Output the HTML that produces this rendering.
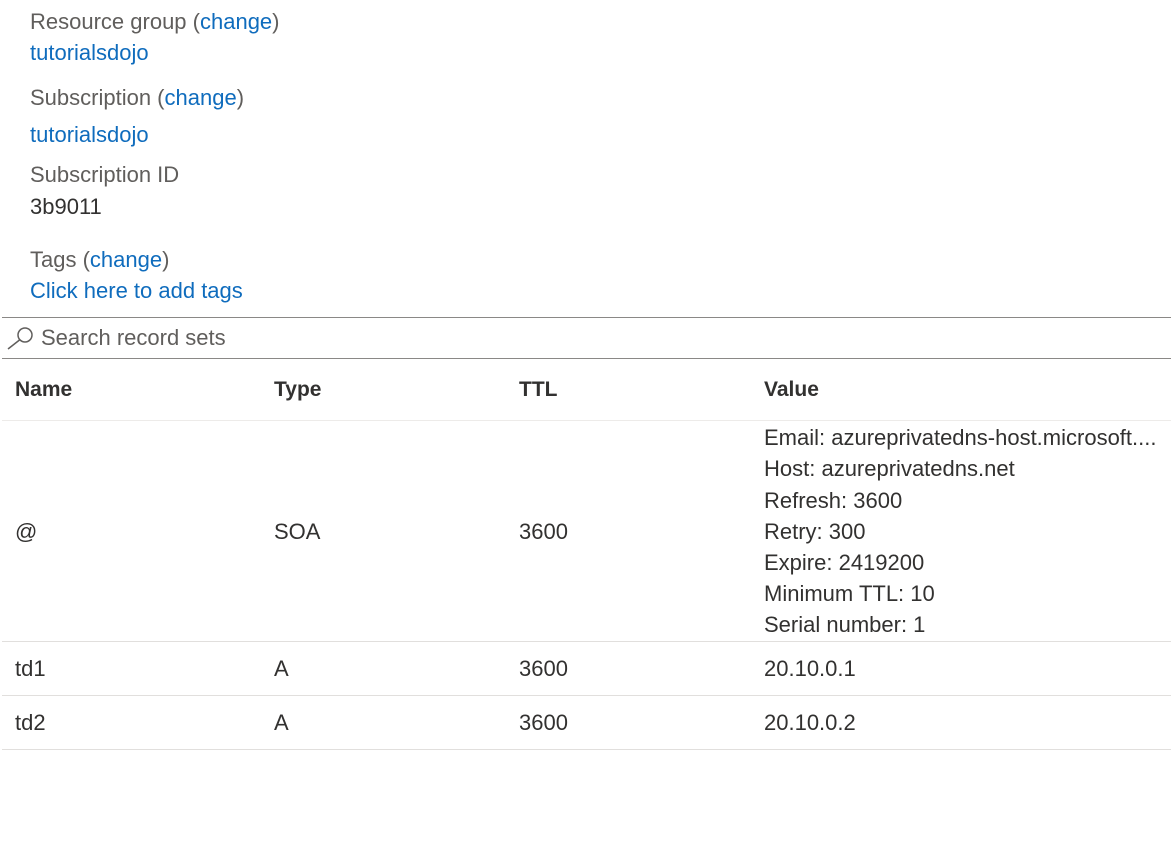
<!DOCTYPE html>
<html><head><style>
body{margin:0;width:1171px;height:858px;background:#fff;font-family:"Liberation Sans",sans-serif;font-size:22px;color:#323130;position:relative;overflow:hidden}
.t{position:absolute;line-height:24px;white-space:nowrap}
.g{color:#605e5c}
a{color:#0f6cbd;text-decoration:none}
.l{color:#0f6cbd}
.line{position:absolute;left:2px;right:0;height:1px;background:#e1dfdd}
.b{font-weight:bold;color:#323130;font-size:21px}
</style></head><body>
<div class="t g" style="left:30px;top:10px">Resource group (<a>change</a>)</div>
<div class="t l" style="left:30px;top:41px">tutorialsdojo</div>
<div class="t g" style="left:30px;top:86px">Subscription (<a>change</a>)</div>
<div class="t l" style="left:30px;top:123px">tutorialsdojo</div>
<div class="t g" style="left:30px;top:163px">Subscription ID</div>
<div class="t" style="left:30px;top:195px">3b9011</div>
<div class="t g" style="left:30px;top:248px">Tags (<a>change</a>)</div>
<div class="t l" style="left:30px;top:279px">Click here to add tags</div>
<div class="line" style="top:317px;background:#8a8886"></div>
<svg style="position:absolute;left:6px;top:326px" width="28" height="24" viewBox="0 0 28 24"><circle cx="19" cy="9" r="7" fill="none" stroke="#605e5c" stroke-width="1.5"/><line x1="13.5" y1="14" x2="2" y2="23" stroke="#605e5c" stroke-width="1.5"/></svg>
<div class="t g" style="left:41px;top:326px">Search record sets</div>
<div class="line" style="top:358px;background:#8a8886"></div>
<div class="t b" style="left:15px;top:378px">Name</div>
<div class="t b" style="left:274px;top:378px">Type</div>
<div class="t b" style="left:519px;top:378px">TTL</div>
<div class="t b" style="left:764px;top:378px">Value</div>
<div class="line" style="top:420px;background:#edebe9"></div>
<div class="t" style="left:15px;top:520px">@</div>
<div class="t" style="left:274px;top:520px">SOA</div>
<div class="t" style="left:519px;top:520px">3600</div>
<div class="t" style="left:764px;top:426px">Email: azureprivatedns-host.microsoft....</div>
<div class="t" style="left:764px;top:457px">Host: azureprivatedns.net</div>
<div class="t" style="left:764px;top:489px">Refresh: 3600</div>
<div class="t" style="left:764px;top:520px">Retry: 300</div>
<div class="t" style="left:764px;top:551px">Expire: 2419200</div>
<div class="t" style="left:764px;top:582px">Minimum TTL: 10</div>
<div class="t" style="left:764px;top:613px">Serial number: 1</div>
<div class="line" style="top:641px"></div>
<div class="t" style="left:15px;top:657px">td1</div>
<div class="t" style="left:274px;top:657px">A</div>
<div class="t" style="left:519px;top:657px">3600</div>
<div class="t" style="left:764px;top:657px">20.10.0.1</div>
<div class="line" style="top:695px"></div>
<div class="t" style="left:15px;top:711px">td2</div>
<div class="t" style="left:274px;top:711px">A</div>
<div class="t" style="left:519px;top:711px">3600</div>
<div class="t" style="left:764px;top:711px">20.10.0.2</div>
<div class="line" style="top:749px"></div>
</body></html>
